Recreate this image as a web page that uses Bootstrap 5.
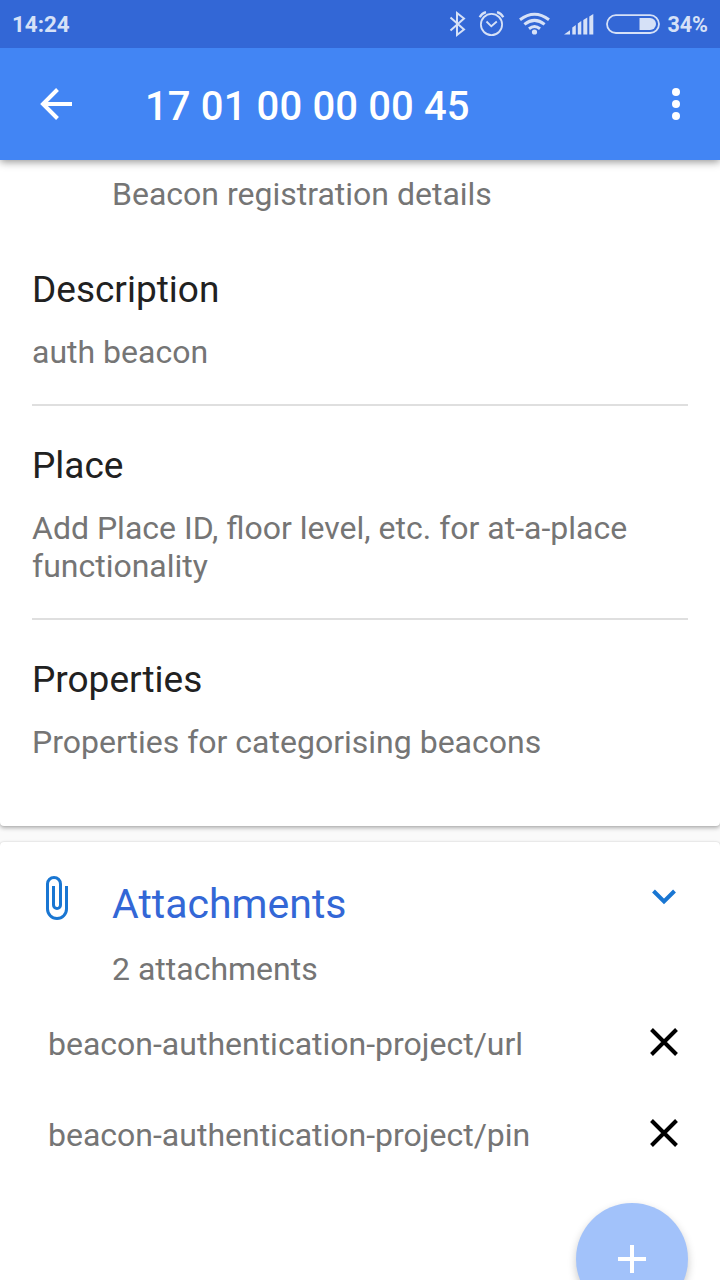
<!DOCTYPE html>
<html lang="en">
<head>
<meta charset="utf-8">
<meta name="viewport" content="width=device-width, initial-scale=1">
<title>Beacon details</title>
<link rel="stylesheet" href="https://cdn.jsdelivr.net/npm/bootstrap@5.3.0/dist/css/bootstrap.min.css">
<style>
html, body { height: 1280px; overflow: hidden; }
body { font-family: Roboto, sans-serif; background: #fafafa; color: #757575; font-size: 32px; line-height: 38px; }
svg { display: block; flex: none; }
.status { height: 48px; background: #3367d6; color: #d6e1f7; font-size: 21.5px; font-weight: 700; line-height: 49px; padding: 0 12px 0 12px; z-index: 3; }
.clock { font-size: 22.4px; }
.appbar { height: 112px; background: #4285f4; padding: 0 40px; box-shadow: 0 2px 8px rgba(0,0,0,.42); z-index: 2; }
.appbar h1 { font-size: 40px; font-weight: 500; line-height: 47px; letter-spacing: .13px; margin: 4px 0 0 73px; }
.panel { border: 0; border-radius: 4px; background: #fff; color: inherit; box-shadow: 0 2px 4px rgba(0,0,0,.3), 0 0 2px rgba(0,0,0,.12); }
.details { height: 666px; border-radius: 0 0 4px 4px; padding: 15px 32px 0; }
.intro { padding-left: 80px; margin-bottom: 17px; }
.entry { padding: 39px 0 33px; }
.entry + .entry { border-top: 2px solid #dfdfdf; }
.entry h2 { font-size: 37px; font-weight: 400; line-height: 42px; color: #212121; margin-bottom: 22px; }
.attachments { height: 460px; margin-top: 16px; padding: 32px 40px 0 32px; }
.attachments h2 { font-size: 41px; font-weight: 400; line-height: 48px; color: #3367d6; margin: 6px 0 0 43px; }
.count { padding-left: 80px; margin: 22px 0 20px; }
.item { height: 91px; padding: 17px 0 0 16px; }
.item svg { margin-top: 1px; }
.fab { width: 112px; height: 112px; right: 32px; top: 1203px; background: #a2c2fa; box-shadow: 0 4px 9px rgba(0,0,0,.22); z-index: 4; }
</style>
</head>
<body>
<div class="status position-relative d-flex justify-content-between">
  <span class="clock">14:24</span>
  <div class="d-flex">
    <svg width="222" height="48" viewBox="445 0 222 48" fill="none" stroke="#d6e1f7">
      <path d="M450.5 17.5 464 29.5 457 35V13l7 5.5-13.5 12" stroke-width="2"/>
      <circle cx="491.5" cy="24.5" r="10.6" stroke-width="1.8"/>
      <path d="m486.5 21.5 4.8 4.8 5.5-4.8" stroke-width="1.8"/>
      <path d="M479.7 17.2q2-3.8 6.3-5M503.3 17.2q-2-3.8-6.3-5" stroke-width="2.3"/>
      <path d="M520 19.7q14.5-11 29 0M524.4 24.4q10.1-8 20.2 0M529 28.7q5.5-4.3 11 0" stroke-width="3"/>
      <circle cx="534.5" cy="32" r="2.6" fill="#d6e1f7" stroke="none"/>
      <path d="M564 34.5 570 30.3V34.5ZM572.3 34.5V27.5l3.5-2.5v9.500ZM577.8 34.5V23.500l3.500-2.500v13.500ZM583.300 34.500V20l4-2.500v17ZM589.300 34.500V16.500l4-2.500v20.500Z" fill="#d6e1f7" stroke="none"/>
      <rect x="607" y="15.200" width="52" height="17.800" rx="8.900" stroke-width="1.800"/>
      <path d="M639.500 18h10.500a6 6 0 0 1 0 12h-10.500Z" fill="#d6e1f7" stroke="none"/>
    </svg>
    <span>34%</span>
  </div>
</div>
<header class="appbar position-relative d-flex align-items-center text-white">
  <svg width="32" height="32" viewBox="0 0 32 32" fill="none" stroke="#fff" stroke-width="4"><path d="M17.500 1.500 3 16l14.500 14.500M2.500 16H32"/></svg>
  <h1>17 01 00 00 00 45</h1>
  <svg class="ms-auto" width="8" height="32" viewBox="0 0 8 32" fill="#fff"><circle cx="4" cy="4" r="4"/><circle cx="4" cy="16" r="4"/><circle cx="4" cy="28" r="4"/></svg>
</header>
<main>
  <section class="panel details">
    <div class="intro">Beacon registration details</div>
    <div class="entry"><h2>Description</h2><div>auth beacon</div></div>
    <div class="entry"><h2>Place</h2><div>Add Place ID, floor level, etc. for at-a-place functionality</div></div>
    <div class="entry"><h2>Properties</h2><div>Properties for categorising beacons</div></div>
  </section>
  <section class="panel attachments">
    <div class="d-flex align-items-start">
      <svg class="ms-2" width="29" height="48" viewBox="40 874 29 48" fill="none" stroke="#1976d2" stroke-width="3"><path d="M66.500 886v23a9.500 9.500 0 0 1-19 0v-25a6.500 6.500 0 0 1 13 0v21a3.500 3.500 0 0 1-7 0v-19"/></svg>
      <h2>Attachments</h2>
      <svg class="ms-auto" width="32" height="48" viewBox="648 874 32 48" fill="none" stroke="#1976d2" stroke-width="4"><path d="m653.500 891 10.500 10.500 10.500-10.500"/></svg>
    </div>
    <div class="count">2 attachments</div>
    <div class="item d-flex justify-content-between align-items-start">
      <span>beacon-authentication-project/url</span>
      <svg width="32" height="32" viewBox="0 0 32 32" stroke="#000" stroke-width="4"><path d="m3.500 3.500 25 25M28.500 3.500l-25 25"/></svg>
    </div>
    <div class="item d-flex justify-content-between align-items-start">
      <span>beacon-authentication-project/pin</span>
      <svg width="32" height="32" viewBox="0 0 32 32" stroke="#000" stroke-width="4"><path d="m3.500 3.500 25 25M28.500 3.500l-25 25"/></svg>
    </div>
  </section>
</main>
<button class="fab btn position-absolute rounded-circle border-0 p-0 d-flex align-items-center justify-content-center" aria-label="Add attachment">
  <svg width="28" height="28" viewBox="0 0 28 28" stroke="#fff" stroke-width="4"><path d="M14 0v28M0 14h28"/></svg>
</button>
<script src="https://cdn.jsdelivr.net/npm/bootstrap@5.3.0/dist/js/bootstrap.bundle.min.js"></script>
</body>
</html>
